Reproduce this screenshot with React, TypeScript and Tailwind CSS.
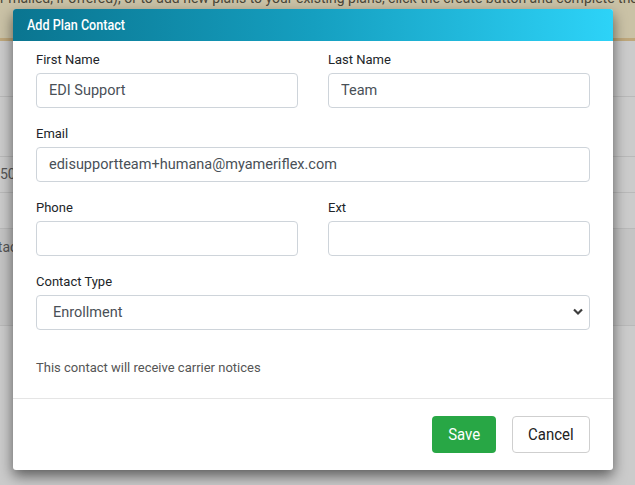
import React from "react";

type FieldProps = {
  label: string;
  value?: string;
};

function Field({ label, value = "" }: FieldProps) {
  return (
    <div className="flex flex-col">
      <label className="text-[13px] leading-[16px] text-[#212529] mb-[5px]">{label}</label>
      <input
        readOnly
        value={value}
        className="h-[35px] w-full rounded-[4px] border border-[#ced4da] bg-white px-[12px] text-[14.5px] text-[#495057] outline-none"
      />
    </div>
  );
}

export default function App() {
  return (
    <div
      className="relative w-[635px] h-[485px] overflow-hidden bg-[#cbcbcb]"
      style={{ fontFamily: "Roboto, 'Liberation Sans', sans-serif" }}
    >
      {/* page behind the dialog, dimmed */}
      <div className="h-[38px] bg-[#cac2a6] overflow-hidden">
        <p className="-mt-[12px] whitespace-nowrap text-[14px] text-[#4a4638]">
          r mailed, if offered), or to add new plans to your existing plans, click the create button and complete the steps
        </p>
      </div>
      <div className="h-[3px] bg-[#bea77b]" />
      <div className="h-[56px] border-b border-[#b9b9b9]" />
      <div className="h-[60px] border-b border-[#b9b9b9]" />
      <div className="h-[36px] border-b border-[#b9b9b9] flex items-center">
        <span className="text-[14px] text-[#555]">502</span>
      </div>
      <div className="h-[36px] border-b border-[#b9b9b9]" />
      <div className="h-[97px] border-b border-[#b9b9b9] bg-[#c4c4c4] pt-[6px]">
        <span className="-ml-[27px] text-[14px] text-[#555]">Contact</span>
      </div>

      {/* dialog */}
      <div className="absolute left-[13px] top-[9px] w-[600px] rounded-[3px] bg-white shadow-[0_6px_14px_rgba(0,0,0,0.55)]">
        <div className="h-[32px] flex items-center pl-[14px] rounded-t-[3px] bg-gradient-to-r from-[#0a7590] via-[#159fc0] to-[#2dd3f8]">
          <span className="inline-block origin-left scale-x-[0.84] text-[15px] font-medium text-white whitespace-nowrap">
            Add Plan Contact
          </span>
        </div>

        <div className="px-[23px] pt-[11px] pb-[22px]">
          <div className="grid grid-cols-2 gap-x-[30px]">
            <Field label="First Name" value="EDI Support" />
            <Field label="Last Name" value="Team" />
          </div>
          <div className="mt-[18px]">
            <Field label="Email" value="edisupportteam+humana@myameriflex.com" />
          </div>
          <div className="mt-[18px] grid grid-cols-2 gap-x-[30px]">
            <Field label="Phone" />
            <Field label="Ext" />
          </div>
          <div className="mt-[18px] flex flex-col">
            <label className="text-[13px] leading-[16px] text-[#212529] mb-[5px]">Contact Type</label>
            <div className="relative">
              <select
                defaultValue="Enrollment"
                className="h-[35px] w-full appearance-none rounded-[4px] border border-[#ced4da] bg-white pl-[16px] text-[14.5px] text-[#495057] outline-none"
              >
                <option>Enrollment</option>
                <option>Billing</option>
                <option>Claims</option>
              </select>
              <svg
                className="pointer-events-none absolute right-[7px] top-[13px]"
                width="10"
                height="8"
                viewBox="0 0 10 8"
              >
                <path d="M1 1.5 L5 5.5 L9 1.5" fill="none" stroke="#3d3d3d" strokeWidth="2.2" />
              </svg>
            </div>
          </div>
          <p className="mt-[30px] text-[13px] leading-[16px] text-[#555]">
            This contact will receive carrier notices
          </p>
        </div>

        <div className="flex justify-end gap-[16px] border-t border-[#e5e5e5] pt-[17px] pb-[17px] pr-[23px]">
          <button className="h-[37px] w-[64px] rounded-[4px] bg-[#28a745] text-white flex items-center justify-center">
            <span className="inline-block scale-x-[0.88] text-[17px]">Save</span>
          </button>
          <button className="h-[37px] w-[78px] rounded-[4px] border border-[#cfcfcf] bg-white text-[#222] flex items-center justify-center">
            <span className="inline-block scale-x-[0.88] text-[17px]">Cancel</span>
          </button>
        </div>
      </div>
    </div>
  );
}
